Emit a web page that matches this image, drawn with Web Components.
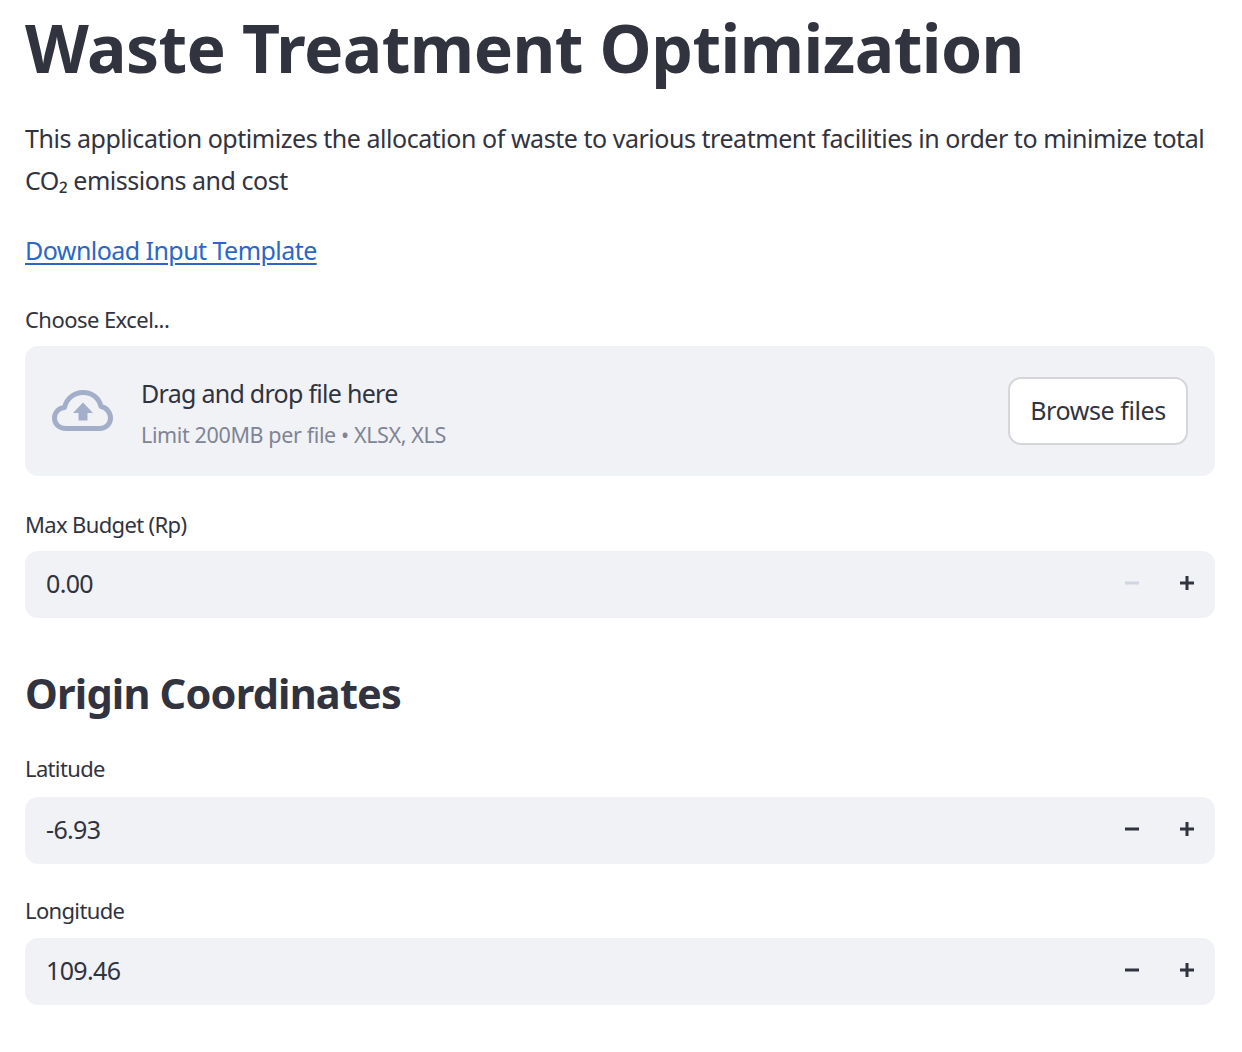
<!DOCTYPE html>
<html lang="en">
<head>
<meta charset="utf-8">
<title>Waste Treatment Optimization</title>
<style>
  html, body { margin: 0; background: #fff; }
  body { font-family: "Noto Sans", "Liberation Sans", sans-serif; color: #31333f; }
</style>
</head>
<body>
<template id="app-tpl">
  <style>
    :host { display: flex; flex-direction: column; width: 1190px; height: 1052px; padding: 0 27px 0 25px; overflow: hidden; }
    h1 { margin: 8px 0 0; font-size: 66px; line-height: 78px; font-weight: 700; letter-spacing: -0.55px; white-space: nowrap; }
    p { margin: 31px 0 0; font-size: 25px; line-height: 42px; letter-spacing: -0.46px; }
    a { display: block; margin-top: 28px; font-size: 25px; line-height: 42px; letter-spacing: -0.55px; color: #2b66c8; text-decoration: underline; text-underline-offset: 3px; }
    h2 { margin: 42px 0 0; font-size: 41.5px; line-height: 66px; font-weight: 700; letter-spacing: -0.8px; white-space: nowrap; }
  </style>
  <h1>Waste Treatment Optimization</h1>
  <p>This application optimizes the allocation of waste to various treatment facilities in order to minimize total CO₂ emissions and cost</p>
  <a href="#">Download Input Template</a>
  <file-drop label="Choose Excel..."></file-drop>
  <number-field label="Max Budget (Rp)" value="0.00" min-off style="margin-top:32px;--gap:11px"></number-field>
  <h2>Origin Coordinates</h2>
  <number-field label="Latitude" value="-6.93" style="margin-top:26px;--gap:13px"></number-field>
  <number-field label="Longitude" value="109.46" style="margin-top:30px;--gap:12px"></number-field>
</template>

<template id="drop-tpl">
  <style>
    :host { display: block; margin-top: 32px; }
    label { display: block; font-size: 22px; line-height: 32px; letter-spacing: -0.55px; margin-bottom: 11px; }
    .zone { display: flex; align-items: center; height: 130px; box-sizing: border-box; padding: 0 27px 0 26px; background: #f0f2f6; border-radius: 13px; }
    svg { width: 62px; height: 46px; flex: none; margin-right: 28px; }
    .txt { flex: 1; padding-top: 2px; }
    .main { font-size: 25px; line-height: 36px; letter-spacing: -0.72px; }
    .sub { font-size: 21.5px; line-height: 30px; margin-top: 9px; letter-spacing: -0.37px; color: #808495; }
    button { width: 180px; height: 68px; box-sizing: border-box; background: #fff; border: 2px solid #d5d6da; border-radius: 13px; color: #31333f; font: inherit; font-size: 25px; letter-spacing: -0.4px; padding: 0 0 2px; }
  </style>
  <label></label>
  <div class="zone">
    <svg viewBox="0 0 62 46" fill="none">
      <path d="M15 40.5 C8 40.5 3.5 36 3.5 30 C3.5 24.5 7.5 20 13.5 19.5 C15.5 10.5 23 4.5 32 4.5 C41 4.5 48 10 50 18.5 C55.5 19.5 59.5 24.5 59.5 30 C59.5 36 55 40.5 48.5 40.5 Z" stroke="#a3afc9" stroke-width="5" stroke-linejoin="round"/>
      <path d="M32 14.5 L42 25 H36.5 V32.5 H27.5 V25 H22 Z" fill="#a3afc9"/>
    </svg>
    <div class="txt">
      <div class="main">Drag and drop file here</div>
      <div class="sub">Limit 200MB per file • XLSX, XLS</div>
    </div>
    <button>Browse files</button>
  </div>
</template>

<template id="num-tpl">
  <style>
    :host { display: block; }
    label { display: block; font-size: 22px; line-height: 32px; letter-spacing: -0.65px; margin-bottom: var(--gap, 10px); }
    .box { display: flex; align-items: center; height: 67px; background: #f0f2f6; border-radius: 13px; padding: 0 1px 0 21px; }
    .val { flex: 1; font-size: 25px; letter-spacing: -0.65px; margin-top: -3px; }
    .step { width: 54.5px; height: 100%; display: flex; align-items: center; justify-content: center; }
    svg { width: 16px; height: 16px; margin-top: -4px; }
    .off { stroke: #d0d5e2; }
  </style>
  <label></label>
  <div class="box">
    <span class="val"></span>
    <span class="step"><svg viewBox="0 0 16 16" fill="none" stroke="#31333f" stroke-width="3"><path class="minus" d="M1 8H15"/></svg></span>
    <span class="step"><svg viewBox="0 0 16 16" fill="none" stroke="#31333f" stroke-width="3"><path d="M1 8H15M8 1V15"/></svg></span>
  </div>
</template>

<script>
  class WasteApp extends HTMLElement {
    constructor() {
      super();
      this.attachShadow({ mode: "open" });
      this.shadowRoot.appendChild(document.getElementById("app-tpl").content.cloneNode(true));
    }
  }

  class FileDrop extends HTMLElement {
    constructor() {
      super();
      this.attachShadow({ mode: "open" });
      this.shadowRoot.appendChild(document.getElementById("drop-tpl").content.cloneNode(true));
    }
    connectedCallback() {
      this.shadowRoot.querySelector("label").textContent = this.getAttribute("label");
    }
  }

  class NumberField extends HTMLElement {
    constructor() {
      super();
      this.attachShadow({ mode: "open" });
      this.shadowRoot.appendChild(document.getElementById("num-tpl").content.cloneNode(true));
    }
    connectedCallback() {
      this.shadowRoot.querySelector("label").textContent = this.getAttribute("label");
      this.shadowRoot.querySelector(".val").textContent = this.getAttribute("value");
      if (this.hasAttribute("min-off")) {
        this.shadowRoot.querySelector(".minus").setAttribute("class", "minus off");
      }
    }
  }

  customElements.define("file-drop", FileDrop);
  customElements.define("number-field", NumberField);
  customElements.define("waste-app", WasteApp);
</script>
<waste-app></waste-app>
</body>
</html>
